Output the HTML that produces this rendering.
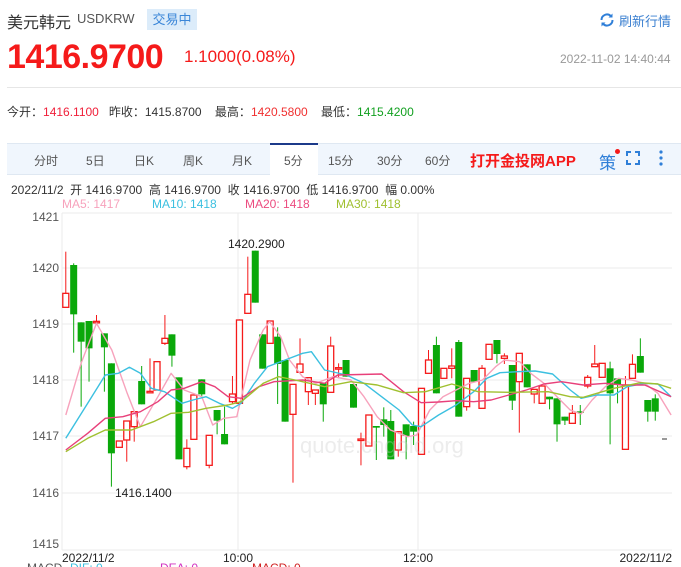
<!DOCTYPE html>
<html><head><meta charset="utf-8"><style>
*{margin:0;padding:0;box-sizing:border-box}
body{width:681px;height:567px;overflow:hidden;background:#fff;font-family:"Liberation Sans","Noto Sans CJK SC",sans-serif;position:relative;color:#333}
.a{position:absolute;white-space:nowrap}
</style></head><body>
<div class="a" style="left:7px;top:9px;font-size:16px;color:#333">美元韩元</div>
<div class="a" style="left:77px;top:11px;font-size:13px;color:#555">USDKRW</div>
<div class="a" style="left:147px;top:9px;width:50px;height:21px;background:#dcecfa;color:#3a86d8;font-size:13px;line-height:21px;text-align:center">交易中</div>
<svg class="a" style="left:599px;top:12px" width="16" height="16" viewBox="0 0 16 16"><path d="M2.5 8a5.5 5.5 0 0 1 9.5-3.8M13.5 8a5.5 5.5 0 0 1-9.5 3.8" fill="none" stroke="#2f7fd8" stroke-width="2"/><path d="M13.5 1.5v4h-4z M2.5 14.5v-4h4z" fill="#2f7fd8"/></svg>
<div class="a" style="left:619px;top:11px;font-size:13px;color:#3a7fd0">刷新行情</div>
<div class="a" style="left:7px;top:38px;font-size:34px;font-weight:bold;color:#f51a1a;letter-spacing:-0.5px">1416.9700</div>
<div class="a" style="left:184px;top:47px;font-size:17px;color:#f51a1a">1.1000(0.08%)</div>
<div class="a" style="left:560px;top:52px;font-size:12px;color:#999">2022-11-02 14:40:44</div>
<div class="a" style="left:7px;top:87px;width:674px;height:1px;background:#e6e6e6"></div>
<div class="a" style="left:7px;top:103px;font-size:12px;color:#333">今开：<span style="color:#f0203a">1416.1100</span>&nbsp;&nbsp;&nbsp;昨收：1415.8700&nbsp;&nbsp;&nbsp;&nbsp;最高：<span style="color:#f03030">1420.5800</span>&nbsp;&nbsp;&nbsp;&nbsp;最低：<span style="color:#12a020">1415.4200</span></div>
<div class="a" style="left:7px;top:143px;width:674px;height:32px;background:#f0f6fd;border-top:1px solid #dfe8f2;border-bottom:1px solid #dfe8f2"></div>
<div class="a" style="left:270px;top:143px;width:48px;height:32px;background:#fff;border-top:2px solid #1c3a8a"></div>
<div class="a" style="top:152px;left:0;font-size:12px;color:#555">
<span class="a" style="left:34px">分时</span><span class="a" style="left:86px">5日</span><span class="a" style="left:134px">日K</span><span class="a" style="left:183px">周K</span><span class="a" style="left:232px">月K</span><span class="a" style="left:284px">5分</span><span class="a" style="left:328px">15分</span><span class="a" style="left:377px">30分</span><span class="a" style="left:425px">60分</span></div>
<div class="a" style="left:470px;top:150px;font-size:15px;font-weight:bold;color:#f51a1a">打开金投网APP</div>
<div class="a" style="left:599px;top:149px;font-size:17px;color:#2f7fd8">策</div>
<div class="a" style="left:615px;top:149px;width:5px;height:5px;border-radius:50%;background:#f51a1a"></div>
<svg class="a" style="left:626px;top:151px" width="14" height="14"><path d="M1 5V1h4M9 1h4v4M13 9v4H9M5 13H1V9" fill="none" stroke="#2f7fd8" stroke-width="2"/></svg>
<svg class="a" style="left:658px;top:150px" width="6" height="16"><circle cx="3" cy="2" r="1.6" fill="#2f7fd8"/><circle cx="3" cy="8" r="1.6" fill="#2f7fd8"/><circle cx="3" cy="14" r="1.6" fill="#2f7fd8"/></svg>
<div class="a" style="left:11px;top:181px;font-size:12px;color:#333">2022/11/2&nbsp; 开 1416.9700&nbsp; 高 1416.9700&nbsp; 收 1416.9700&nbsp; 低 1416.9700&nbsp; 幅 0.00%</div>
<div class="a" style="left:62px;top:197px;font-size:12px"><span style="color:#f7a2bc">MA5: 1417</span></div>
<div class="a" style="left:152px;top:197px;font-size:12px;color:#3cc0e0">MA10: 1418</div>
<div class="a" style="left:245px;top:197px;font-size:12px;color:#ec4c80">MA20: 1418</div>
<div class="a" style="left:336px;top:197px;font-size:12px;color:#a0c030">MA30: 1418</div>
<svg class="a" id="ch" style="left:0;top:0" width="681" height="567"></svg>
<div class="a" style="left:300px;top:433px;font-size:22px;color:rgba(200,200,200,0.35)">quote.cngold.org</div>
<script>
var s='';
var Y=function(z){return 210+z/3}, X=function(z){return z/2.28};
var ys=[[1421,213],[1420,268],[1419,324],[1418,380],[1417,436],[1416,493],[1415,550]];
ys.forEach(function(r){s+='<line x1="62" x2="672" y1="'+r[1]+'" y2="'+r[1]+'" stroke="#ebebeb"/>';});
[62,238,418].forEach(function(x){s+='<line x1="'+x+'" x2="'+x+'" y1="213" y2="550" stroke="#ebebeb"/>';});
var lab=[[1421,217],[1420,268],[1419,324],[1418,380],[1417,436],[1416,493],[1415,544]];
lab.forEach(function(r){s+='<text x="59" y="'+(r[1]+4)+'" text-anchor="end" font-size="12" fill="#555">'+r[0]+'</text>';});
var c=[[150,'r',250,292,125,292],[168,'g',165,313,160,428],[185,'g',337,395,337,590],[203,'g',333,415,333,515],[220,'r',334,337,315,345],[238,'g',370,412,370,545],[254,'g',460,730,460,830],[272,'r',693,712,693,712],[289,'r',633,690,633,755],[306,'r',605,650,605,695],[323,'g',513,583,468,583],[342,'r',544,547,445,547],[358,'r',455,540,455,540],[376,'r',385,400,315,405],[392,'g',373,437,373,470],[408,'g',502,748,502,748],[426,'r',715,770,688,778],[442,'r',555,688,555,688],[460,'g',508,553,508,560],[477,'r',676,766,676,775],[495,'g',600,632,600,673],[512,'g',672,703,590,703],[530,'r',552,575,498,582],[546,'r',330,580,328,580],[565,'r',253,310,140,310],[582,'g',122,278,122,278],[599,'g',373,476,373,476],[616,'r',333,400,333,400],[633,'g',380,462,352,582],[650,'g',450,635,450,635],[668,'r',523,613,523,818],[684,'r',462,487,385,490],[703,'r',503,545,503,585],[719,'r',540,550,540,585],[737,'g',520,583,520,635],[754,'r',408,547,380,547],[772,'r',473,477,460,505],[789,'g',450,500,450,500],[806,'g',522,593,522,593],[823,'r',687,691,668,766],[841,'r',615,708,615,708],[858,'g',648,653,648,750],[875,'g',628,645,592,680],[891,'g',633,748,600,748],[908,'r',665,720,665,740],[926,'g',643,678,643,748],[943,'g',648,665,635,705],[961,'r',535,733,535,733],[977,'r',450,490,420,490],[995,'g',405,550,380,550],[1012,'r',475,505,475,505],[1030,'r',468,475,415,505],[1046,'g',396,620,390,620],[1064,'r',505,590,505,602],[1081,'g',480,515,480,515],[1099,'r',475,595,465,595],[1115,'r',403,448,403,448],[1133,'g',390,432,390,460],[1150,'r',438,445,430,462],[1168,'g',465,572,465,600],[1184,'r',430,515,430,668],[1202,'g',463,532,463,532],[1218,'r',538,552,538,580],[1236,'r',528,580,528,580],[1253,'g',560,568,560,598],[1270,'g',565,643,565,695],[1288,'g',620,632,620,645],[1305,'r',610,640,585,640],[1323,'g',604,608,585,645],[1340,'r',502,528,495,535],[1356,'r',462,470,405,470],[1373,'r',460,502,460,502],[1391,'g',475,550,455,703],[1408,'g',505,525,505,580],[1426,'r',525,718,498,718],[1442,'r',463,505,433,505],[1460,'g',438,488,385,488],[1477,'g',570,605,570,635],[1494,'g',565,605,553,632]];
c.forEach(function(k){var x=X(k[0]),col=k[1]=='r'?'#f51a1a':'#0aa80a';
s+='<line x1="'+x+'" x2="'+x+'" y1="'+Y(k[4])+'" y2="'+Y(k[5])+'" stroke="'+col+'"/>';
var t=Y(k[2]),h=Math.max(1.5,Y(k[3])-t);
if(k[1]=='r')s+='<rect x="'+(x-3)+'" y="'+t+'" width="6" height="'+h+'" fill="#fff" stroke="'+col+'" stroke-width="1.3"/>';
else s+='<rect x="'+(x-3.5)+'" y="'+t+'" width="7" height="'+h+'" fill="'+col+'"/>';});
s+='<line x1="662" x2="667" y1="439" y2="439" stroke="#333"/>';
function L(p,col){var d='';for(var i=0;i<p.length;i+=2)d+=(i?'L':'M')+X(p[i]).toFixed(1)+' '+Y(p[i+1]).toFixed(1);s+='<path d="'+d+'" fill="none" stroke="'+col+'" stroke-width="1.4" stroke-linejoin="round"/>';}
L([150,615,185,460,220,340,255,420,290,550,320,650,360,560,390,490,420,540,460,560,485,645,510,625,540,620,570,450,600,360,615,335,640,380,660,450,690,500,720,520,760,500,800,510,830,560,860,620,890,660,930,680,950,675,980,600,1010,560,1040,540,1070,520,1100,510,1130,470,1150,450,1185,455,1210,490,1240,520,1270,560,1300,600,1325,612,1350,570,1380,530,1410,505,1440,510,1470,520,1500,550,1530,615],'#f7a2bc');
L([150,685,200,580,240,495,270,490,295,472,320,490,345,535,375,545,415,580,440,570,470,560,500,580,530,595,550,580,580,520,610,470,650,450,690,430,710,425,740,480,790,495,830,520,870,560,910,600,940,645,960,650,1000,615,1040,585,1080,545,1110,505,1140,488,1180,485,1220,483,1260,492,1300,540,1325,565,1360,555,1400,555,1430,530,1470,520,1500,522,1530,560],'#3cc0e0');
L([150,720,200,670,240,625,280,620,320,605,360,575,390,540,420,535,460,515,490,530,520,560,550,565,590,530,625,515,690,510,740,520,770,495,870,492,920,545,960,578,1000,576,1040,572,1080,575,1120,570,1160,555,1200,540,1240,522,1280,515,1330,525,1380,520,1420,525,1470,525,1530,560],'#e8407a');
L([150,725,200,685,240,660,300,660,350,635,390,610,430,607,470,595,520,585,550,575,600,520,635,500,680,512,740,530,800,515,860,525,920,548,970,545,1030,522,1090,545,1160,547,1250,545,1300,560,1330,562,1400,535,1460,518,1500,522,1530,535],'#a0c030');
s+='<text x="228" y="248" font-size="12" fill="#222">1420.2900</text>';
s+='<text x="115" y="497" font-size="12" fill="#222">1416.1400</text>';
s+='<text x="62" y="562" font-size="12" fill="#222">2022/11/2</text><text x="223" y="562" font-size="12" fill="#222">10:00</text><text x="403" y="562" font-size="12" fill="#222">12:00</text><text x="672" y="562" font-size="12" fill="#222" text-anchor="end">2022/11/2</text>';
s+='<text x="27" y="572" font-size="12" fill="#555">MACD</text><text x="70" y="572" font-size="12" fill="#3cc0e0">DIF: 0</text><text x="160" y="572" font-size="12" fill="#d030c0">DEA: 0</text><text x="252" y="572" font-size="12" fill="#d02020">MACD: 0</text>';
document.getElementById('ch').innerHTML=s;
</script>
</body></html>
